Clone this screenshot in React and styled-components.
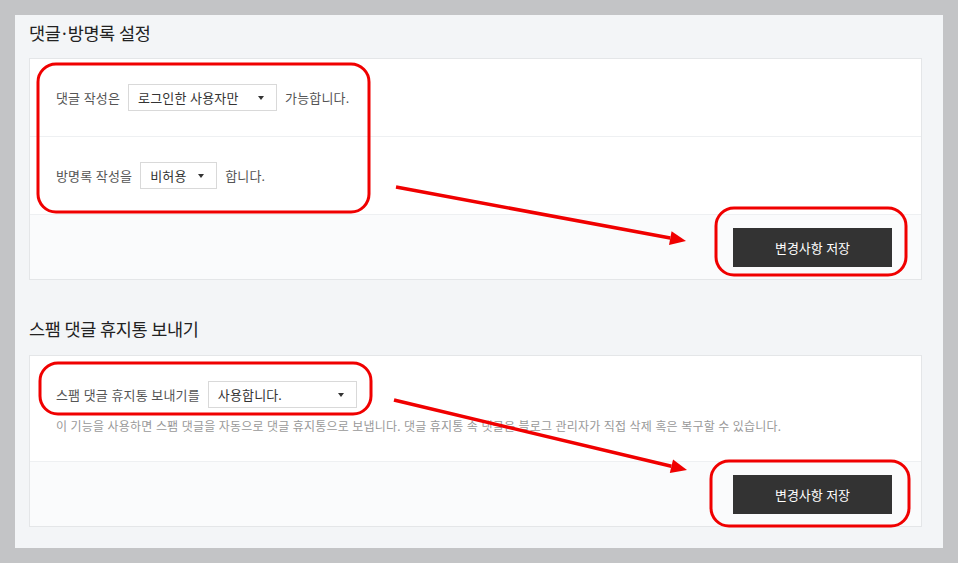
import React from 'react';
import styled, { createGlobalStyle } from 'styled-components';

const GlobalStyle = createGlobalStyle`
  body {
    margin: 0;
    background: #c3c4c6;
    font-family: "Noto Sans", "Noto Sans CJK KR", sans-serif;
  }
`;

const Page = styled.div`
  position: relative;
  width: 958px;
  height: 563px;
  padding: 15px;
  box-sizing: border-box;
`;

const Panel = styled.div`
  background: #f3f5f7;
  height: 533px;
  padding: 5px 21px 0 14px;
  box-sizing: border-box;
`;

const Title = styled.h2`
  margin: ${(p) => (p.second ? '36px 0 13px' : '0 0 12px')};
  font-size: 17.5px;
  line-height: 26px;
  font-weight: 400;
  color: #222;
  letter-spacing: -0.4px;
`;

const Dot = styled.span`
  margin: 0 1.5px;
`;

const Card = styled.div`
  border: 1px solid #e4e6e8;
  background: #fff;
`;

const Row = styled.div`
  padding: 25px 26px ${(p) => (p.tall ? '25px' : '25px')};
  border-top: ${(p) => (p.first ? 'none' : '1px solid #eef0f2')};
  background: #fff;
`;

const Line = styled.div`
  display: flex;
  align-items: center;
  gap: 8px;
  font-size: 13px;
  color: #555;
  letter-spacing: 0.15px;
`;

const SelectBox = styled.div`
  display: flex;
  align-items: center;
  justify-content: space-between;
  width: ${(p) => p.w}px;
  height: 27px;
  box-sizing: border-box;
  border: 1px solid #d9d9d9;
  background: #fff;
  padding: 0 12px 0 9px;
  font-size: 13px;
  color: #333;

  &::after {
    content: '';
    width: 0;
    height: 0;
    border-left: 3.5px solid transparent;
    border-right: 3.5px solid transparent;
    border-top: 4px solid #333;
  }
`;

const Desc = styled.p`
  margin: 10px 0 0;
  font-size: 12px;
  line-height: 18px;
  color: #999;
  letter-spacing: 0.2px;
`;

const Footer = styled.div`
  display: flex;
  justify-content: flex-end;
  align-items: center;
  height: 64px;
  padding-right: 29px;
  border-top: 1px solid #eef0f2;
  background: #fafbfc;
`;

const SaveButton = styled.button`
  width: 159px;
  height: 39px;
  border: none;
  background: #333;
  color: #fff;
  font-family: inherit;
  font-size: 13px;
  cursor: pointer;
`;

const Overlay = styled.svg`
  position: absolute;
  left: 0;
  top: 0;
  pointer-events: none;
`;

const RED = '#f00000';

function Arrow({ x1, y1, x2, y2 }) {
  const dx = x2 - x1;
  const dy = y2 - y1;
  const len = Math.hypot(dx, dy);
  const ux = dx / len;
  const uy = dy / len;
  const bx = x2 - ux * 16;
  const by = y2 - uy * 16;
  const px = -uy * 7;
  const py = ux * 7;
  return (
    <g>
      <line x1={x1} y1={y1} x2={bx} y2={by} stroke={RED} strokeWidth="3.5" />
      <polygon
        points={`${x2},${y2} ${bx + px},${by + py} ${bx - px},${by - py}`}
        fill={RED}
      />
    </g>
  );
}

function Mark({ x, y, w, h }) {
  return <rect x={x} y={y} width={w} height={h} rx="18" fill="none" stroke={RED} strokeWidth="3" />;
}

export default function App() {
  return (
    <>
      <GlobalStyle />
      <Page>
        <Panel>
          <Title>댓글<Dot>·</Dot>방명록 설정</Title>
          <Card>
            <Row first>
              <Line>
                댓글 작성은
                <SelectBox w={149}>로그인한 사용자만</SelectBox>
                가능합니다.
              </Line>
            </Row>
            <Row>
              <Line>
                방명록 작성을
                <SelectBox w={77}>비허용</SelectBox>
                합니다.
              </Line>
            </Row>
            <Footer>
              <SaveButton>변경사항 저장</SaveButton>
            </Footer>
          </Card>

          <Title second>스팸 댓글 휴지통 보내기</Title>
          <Card>
            <Row first tall>
              <Line>
                스팸 댓글 휴지통 보내기를
                <SelectBox w={149}>사용합니다.</SelectBox>
              </Line>
              <Desc>
                이 기능을 사용하면 스팸 댓글을 자동으로 댓글 휴지통으로 보냅니다. 댓글 휴지통 속 댓글은 블로그 관리자가 직접 삭제 혹은 복구할 수 있습니다.
              </Desc>
            </Row>
            <Footer>
              <SaveButton>변경사항 저장</SaveButton>
            </Footer>
          </Card>
        </Panel>

        <Overlay width="958" height="563" viewBox="0 0 958 563">
          <Mark x={38} y={64} w={331} h={148} />
          <Mark x={716} y={208} w={190} h={67} />
          <Mark x={40} y={363} w={331} h={51} />
          <Mark x={711} y={461} w={198} h={65} />
          <Arrow x1={396} y1={187} x2={686} y2={241} />
          <Arrow x1={394} y1={400} x2={687} y2={470} />
        </Overlay>
      </Page>
    </>
  );
}
